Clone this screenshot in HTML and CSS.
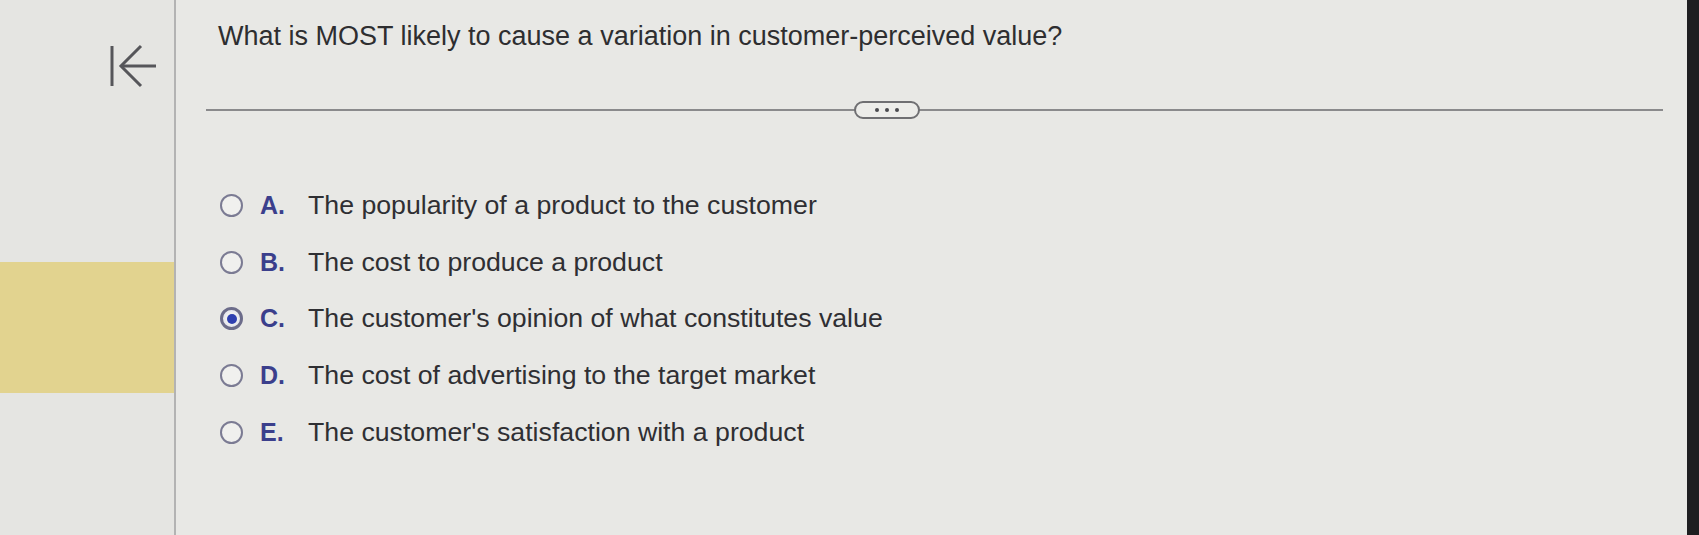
FILE: index.html
```html
<!DOCTYPE html>
<html>
<head>
<meta charset="utf-8">
<link rel="stylesheet" href="styles.css">
</head>
<body>
<div class="screen">
  <aside class="sidebar">
    <svg class="collapse-icon" width="50" height="44" viewBox="0 0 50 44">
      <line x1="4" y1="2" x2="4" y2="42" stroke="#56565a" stroke-width="3"/>
      <polyline points="33,2 13,22 33,42" fill="none" stroke="#56565a" stroke-width="3"/>
      <line x1="13" y1="22" x2="48" y2="22" stroke="#56565a" stroke-width="3"/>
    </svg>
    <div class="highlight"></div>
  </aside>
  <main class="content">
    <h1 class="question">What is MOST likely to cause a variation in customer-perceived value?</h1>
    <div class="divider">
      <span class="more"><i></i><i></i><i></i></span>
    </div>
    <ul class="options">
      <li class="option"><span class="radio"></span><span class="letter">A.</span><span class="text">The popularity of a product to the customer</span></li>
      <li class="option"><span class="radio"></span><span class="letter">B.</span><span class="text">The cost to produce a product</span></li>
      <li class="option"><span class="radio checked"></span><span class="letter">C.</span><span class="text">The customer's opinion of what constitutes value</span></li>
      <li class="option"><span class="radio"></span><span class="letter">D.</span><span class="text">The cost of advertising to the target market</span></li>
      <li class="option"><span class="radio"></span><span class="letter">E.</span><span class="text">The customer's satisfaction with a product</span></li>
    </ul>
  </main>
  <div class="bezel"></div>
</div>
</body>
</html>
```

FILE: styles.css
```css
* { box-sizing: border-box; }
html, body {
  margin: 0;
  padding: 0;
  width: 1699px;
  height: 535px;
  overflow: hidden;
  background: #e7e7e4;
  font-family: "Liberation Sans", Arial, sans-serif;
}
.screen {
  display: flex;
  height: 535px;
}
.sidebar {
  width: 176px;
  flex: 0 0 176px;
  border-right: 2px solid #b3b3b3;
  display: flex;
  flex-direction: column;
  background: #e5e5e2;
}
.collapse-icon {
  display: block;
  margin: 44px 0 0 108px;
}
.highlight {
  margin-top: 174px;
  width: 174px;
  height: 131px;
  background: #e2d38f;
}
.content {
  flex: 1;
  padding: 21px 24px 0 30px;
  background: #e8e8e5;
}
.question {
  margin: 0 0 0 12px;
  font-size: 27px;
  font-weight: normal;
  line-height: 31px;
  color: #2e2e30;
}
.divider {
  position: relative;
  margin-top: 57px;
  height: 2px;
  background: #8a8a8c;
}
.more {
  position: absolute;
  left: 648px;
  top: -8px;
  width: 66px;
  height: 18px;
  border: 2px solid #6f6f72;
  border-radius: 10px;
  background: #ecece9;
  display: flex;
  align-items: center;
  justify-content: center;
  gap: 6px;
}
.more i {
  width: 4px;
  height: 4px;
  border-radius: 50%;
  background: #4a4a4e;
}
.options {
  list-style: none;
  margin: 66px 0 0 0;
  padding: 0 0 0 14px;
}
.option {
  display: flex;
  align-items: center;
  height: 56.7px;
  font-size: 26.7px;
  color: #2f2f33;
}
.radio {
  width: 23px;
  height: 23px;
  border: 2.5px solid #7b7b93;
  border-radius: 50%;
  background: #f0f0ee;
  display: flex;
  align-items: center;
  justify-content: center;
}
.radio.checked {
  border: 3px solid #6c6c8a;
  box-shadow: inset 0 0 0 2px #e8e8f0;
}
.radio.checked::after {
  content: "";
  width: 10px;
  height: 10px;
  border-radius: 50%;
  background: #2f3fb0;
}
.letter {
  width: 48px;
  margin-left: 17px;
  font-weight: bold;
  font-size: 25px;
  color: #3b3f8c;
}
.text {
  white-space: nowrap;
}
.bezel {
  flex: 0 0 12px;
  background: #1e1e20;
}
```
